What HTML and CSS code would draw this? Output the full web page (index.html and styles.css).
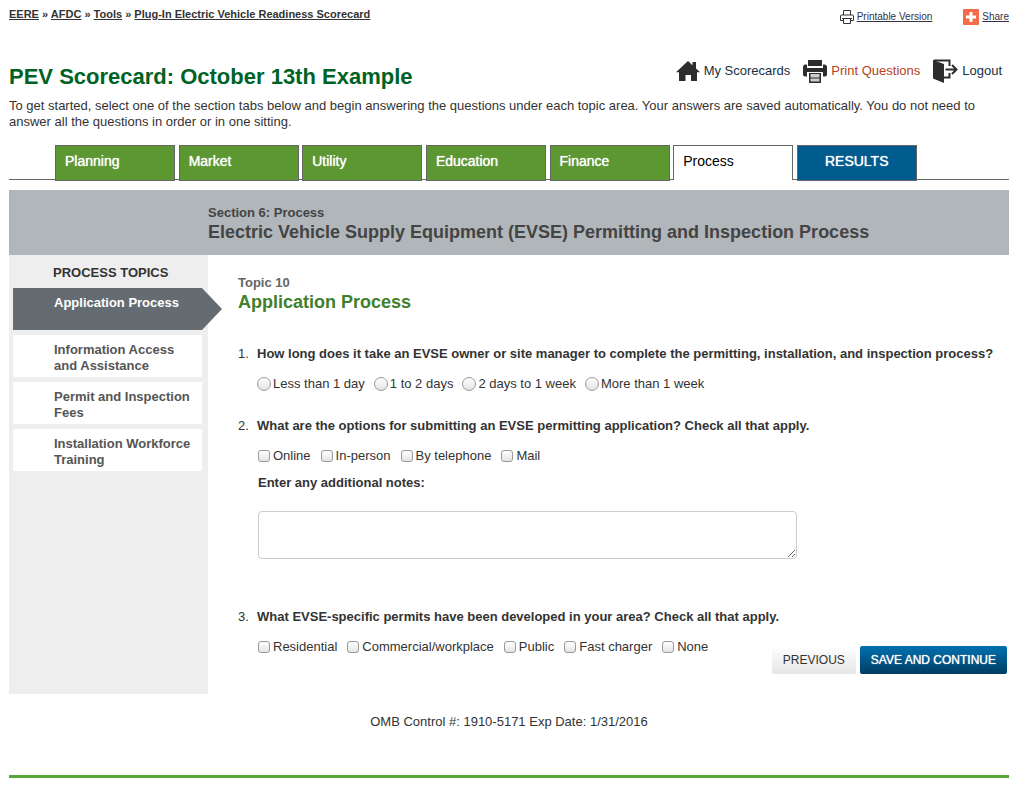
FILE: index.html
```html
<!DOCTYPE html>
<html lang="en">
<head>
  <meta charset="UTF-8">
  <meta name="viewport" content="width=device-width, initial-scale=1.0">
  <title>Plug-In Electric Vehicle Readiness Scorecard</title>
  <link rel="stylesheet" href="styles.css">
</head>
<body>
  <div class="topbar">
    <nav class="breadcrumb">
      <a href="#">EERE</a> » <a href="#">AFDC</a> » <a href="#">Tools</a> » <a href="#">Plug-In Electric Vehicle Readiness Scorecard</a>
    </nav>
    <div class="page-tools">
      <a href="#">
        <svg width="14" height="14" viewBox="0 0 14 14" fill="none" stroke="#333">
          <path d="M3.500 5V.5h7V5M3 10.500H.5V6q0-1 1-1h11q1 0 1 1v4.500H11M3.500 8.500h7v5h-7zM2 8.500h10"/>
        </svg>
        <span>Printable Version</span>
      </a>
      <a href="#" class="share">
        <svg width="16" height="16" viewBox="0 0 16 16">
          <rect width="16" height="16" rx="1" fill="#f56b4b"/>
          <path d="M8 3v10M3 8h10" stroke="#fff" stroke-width="3"/>
        </svg>
        <span>Share</span>
      </a>
    </div>
  </div>

  <header class="header">
    <h1>PEV Scorecard: October 13th Example</h1>
    <nav class="user-links">
      <a href="#">
        <svg width="24" height="22" viewBox="0 0 24 22" fill="#2d2d2d">
          <path d="M12 1l4.500 4.300V2H20v6.500L24 12.300h-3V21h-6v-6H9.500v6H3v-8.700H0z"/>
        </svg>
        My Scorecards
      </a>
      <a href="#" class="print">
        <svg width="24" height="24" viewBox="0 0 24 24" fill="#2d2d2d">
          <path d="M5 1h14v6H5z"/>
          <path d="M2 5.500h2V9h16V5.500h2q2 .5 2 2.500v7.500q0 2-2 2h-2V13H4v4.500H2q-2 0-2-2V8q0-2 2-2.500z"/>
          <path d="M6 14h12v10H6z"/>
          <path d="M7.500 15h9v3.500h-9zM7.500 19.500h9v3h-9z" fill="#ccc"/>
        </svg>
        Print Questions
      </a>
      <a href="#">
        <svg width="25" height="24" viewBox="0 0 25 24" fill="#2d2d2d">
          <path d="M0 1l11 4v19L0 19.500z"/>
          <path d="M1 1.500h15.500V7M11 18.500h5.500V14" fill="none" stroke="#2d2d2d" stroke-width="2"/>
          <path d="M12.500 10.500h10M19 6l4.500 4.500L19 15" fill="none" stroke="#2d2d2d" stroke-width="2"/>
        </svg>
        Logout
      </a>
    </nav>
  </header>

  <p class="intro">To get started, select one of the section tabs below and begin answering the questions under each topic area. Your answers are saved automatically. You do not need to answer all the questions in order or in one sitting.</p>

  <nav class="tabs">
    <a href="#">Planning</a>
    <a href="#">Market</a>
    <a href="#">Utility</a>
    <a href="#">Education</a>
    <a href="#">Finance</a>
    <a href="#" class="active">Process</a>
    <a href="#" class="results">RESULTS</a>
  </nav>

  <div class="section-head">
    <p>Section 6: Process</p>
    <h2>Electric Vehicle Supply Equipment (EVSE) Permitting and Inspection Process</h2>
  </div>

  <div class="main">
    <aside class="sidebar">
      <h3>PROCESS TOPICS</h3>
      <ul>
        <li><a href="#" class="active">Application Process</a></li>
        <li><a href="#">Information Access and Assistance</a></li>
        <li><a href="#">Permit and Inspection Fees</a></li>
        <li><a href="#">Installation Workforce Training</a></li>
      </ul>
    </aside>

    <form class="content">
      <p class="topic">Topic 10</p>
      <h2>Application Process</h2>

      <fieldset>
        <legend><span class="num">1.</span>How long does it take an EVSE owner or site manager to complete the permitting, installation, and inspection process?</legend>
        <div class="options">
          <label><input type="radio" name="time">Less than 1 day</label>
          <label><input type="radio" name="time">1 to 2 days</label>
          <label><input type="radio" name="time">2 days to 1 week</label>
          <label><input type="radio" name="time">More than 1 week</label>
        </div>
      </fieldset>

      <fieldset>
        <legend><span class="num">2.</span>What are the options for submitting an EVSE permitting application? Check all that apply.</legend>
        <div class="options">
          <label><input type="checkbox" name="submit">Online</label>
          <label><input type="checkbox" name="submit">In-person</label>
          <label><input type="checkbox" name="submit">By telephone</label>
          <label><input type="checkbox" name="submit">Mail</label>
        </div>
        <label for="notes" class="notes-label">Enter any additional notes:</label>
        <textarea id="notes" name="notes"></textarea>
      </fieldset>

      <fieldset class="last">
        <legend><span class="num">3.</span>What EVSE-specific permits have been developed in your area? Check all that apply.</legend>
        <div class="options">
          <label><input type="checkbox" name="permits">Residential</label>
          <label><input type="checkbox" name="permits">Commercial/workplace</label>
          <label><input type="checkbox" name="permits">Public</label>
          <label><input type="checkbox" name="permits">Fast charger</label>
          <label><input type="checkbox" name="permits">None</label>
        </div>
      </fieldset>

      <div class="buttons">
        <button type="button" class="btn">PREVIOUS</button>
        <button type="button" class="btn btn-primary">SAVE AND CONTINUE</button>
      </div>
    </form>
  </div>

  <footer class="footer">OMB Control #: 1910-5171 Exp Date: 1/31/2016</footer>
</body>
</html>
```
FILE: styles.css
```css
* {
  box-sizing: border-box;
}
body {
  margin: 0;
  padding: 6px 13px 0 9px;
  font-family: "Liberation Sans", Arial, sans-serif;
  font-size: 13px;
  line-height: 16px;
  color: #333;
  background: #fff;
}
h1, h2, h3, p, ul {
  margin: 0;
  padding: 0;
}
ul {
  list-style: none;
}
a {
  color: #333;
}

/* top line */
.topbar {
  display: flex;
  justify-content: space-between;
  height: 52px;
}
.breadcrumb {
  font-size: 11px;
  font-weight: bold;
}
.page-tools {
  display: flex;
  align-items: flex-start;
  gap: 31px;
  padding-top: 3px;
  font-size: 10px;
}
.page-tools a {
  display: flex;
  align-items: center;
  gap: 3px;
  color: #333344;
}

/* title and user links */
.header {
  display: flex;
  justify-content: space-between;
  align-items: flex-start;
}
.header h1 {
  font-size: 22px;
  line-height: 26px;
  padding-top: 6px;
  color: #006325;
}
.user-links {
  display: flex;
  gap: 13px;
  padding-right: 7px;
}
.user-links a {
  display: flex;
  align-items: center;
  gap: 4px;
  height: 25px;
  color: #14303f;
  text-decoration: none;
}
.user-links .print {
  color: #b5421c;
}
.intro {
  padding-top: 8px;
}

/* section tabs */
.tabs {
  height: 35px;
  margin-top: 15px;
  padding-left: 46px;
  border-bottom: 1px solid #666;
  white-space: nowrap;
}
.tabs a {
  display: inline-block;
  vertical-align: top;
  width: 120px;
  height: 36px;
  padding: 7px 9px;
  border: 1px solid #666;
  background: #5c9732;
  color: #fff;
  font-size: 14px;
  text-decoration: none;
  text-shadow: 0 0 1px #fff;
}
.tabs .active {
  height: 35px;
  border-bottom: none;
  background: #fff;
  color: #000;
  text-shadow: none;
}
.tabs .results {
  background: #005b8e;
  text-align: center;
}

.section-head {
  margin-top: 10px;
  padding: 15px 0 12px 199px;
  background: #b1b6ba;
  color: #444;
  font-weight: bold;
}
.section-head h2 {
  font-size: 18px;
  line-height: 22px;
}

.main {
  display: flex;
}

/* topic list */
.sidebar {
  flex: 0 0 199px;
  min-height: 439px;
  padding: 10px 6px 0 4px;
  background: #eee;
}
.sidebar h3 {
  margin-bottom: 7px;
  padding-left: 40px;
  font-size: 13px;
}
.sidebar ul {
  display: grid;
  gap: 5px;
}
.sidebar a {
  display: block;
  position: relative;
  min-height: 42px;
  padding: 7px 8px 3px 41px;
  background: #fff;
  color: #555;
  font-weight: bold;
  text-decoration: none;
}
.sidebar .active {
  background: #646c72;
  color: #fff;
}
.sidebar .active::after {
  content: "";
  position: absolute;
  top: 0;
  left: 100%;
  border-top: 21px solid transparent;
  border-bottom: 21px solid transparent;
  border-left: 20px solid #646c72;
}

/* questions */
.content {
  flex: 1;
  padding: 20px 0 0 30px;
}
.topic {
  color: #666;
  font-weight: bold;
}
.content h2 {
  margin-bottom: 33px;
  color: #417f2c;
  font-size: 18px;
  line-height: 22px;
}
fieldset {
  min-width: 0;
  margin: 0 0 26px;
  padding: 0 0 0 20px;
  border: none;
}
legend {
  margin-left: -20px;
  padding: 0;
  font-weight: bold;
}
.num {
  display: inline-block;
  width: 19px;
  font-weight: normal;
}
.options {
  display: flex;
  flex-wrap: wrap;
  gap: 10px;
  padding-top: 14px;
}
.options label {
  display: flex;
  align-items: center;
  gap: 3px;
}
.options input {
  appearance: none;
  width: 12px;
  height: 12px;
  margin: 0;
  border: 1px solid #999;
  border-radius: 3px;
  background: linear-gradient(#fff, #e4e4e4);
}
.options input[type="radio"] {
  width: 14px;
  height: 14px;
  margin: 0 -1px;
  border-radius: 50%;
}
.options input:checked {
  background: #777;
}
.notes-label {
  display: block;
  margin: 11px 0 20px;
  font-weight: bold;
}
textarea {
  display: block;
  width: 539px;
  max-width: 100%;
  height: 48px;
  border: 1px solid #ccc;
  border-radius: 4px;
  font: inherit;
}
fieldset + .last {
  margin: 50px 0 0;
}

.buttons {
  display: flex;
  justify-content: flex-end;
  gap: 4px;
  margin-top: -9px;
  padding-right: 2px;
}
.btn {
  height: 28px;
  padding: 0 11px;
  border: none;
  border-radius: 2px;
  background: linear-gradient(#fff, #e6e6e6);
  color: #333;
  font-family: inherit;
  font-size: 12px;
  cursor: pointer;
}
.btn-primary {
  background: linear-gradient(#0071b0, #003d60);
  color: #fff;
  text-shadow: 0 0 1px #fff;
}

.footer {
  padding: 20px 0 45px;
  border-bottom: 3px solid #5ba63c;
  text-align: center;
}
```
